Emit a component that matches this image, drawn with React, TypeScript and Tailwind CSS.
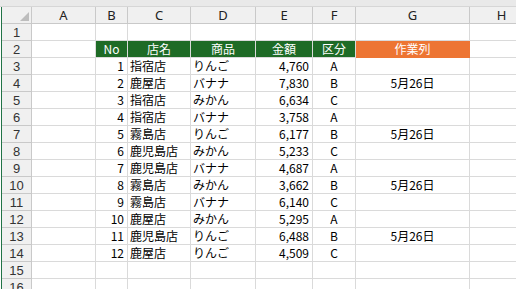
// Excel風シート: 作業列つきの売上表

type Row = { no: number; shop: string; item: string; amount: string; kind: string; work?: string };

const rows: Row[] = [
  { no: 1, shop: '指宿店', item: 'りんご', amount: '4,760', kind: 'A' },
  { no: 2, shop: '鹿屋店', item: 'バナナ', amount: '7,830', kind: 'B', work: '5月26日' },
  { no: 3, shop: '指宿店', item: 'みかん', amount: '6,634', kind: 'C' },
  { no: 4, shop: '指宿店', item: 'バナナ', amount: '3,758', kind: 'A' },
  { no: 5, shop: '霧島店', item: 'りんご', amount: '6,177', kind: 'B', work: '5月26日' },
  { no: 6, shop: '鹿児島店', item: 'みかん', amount: '5,233', kind: 'C' },
  { no: 7, shop: '鹿児島店', item: 'バナナ', amount: '4,687', kind: 'A' },
  { no: 8, shop: '霧島店', item: 'みかん', amount: '3,662', kind: 'B', work: '5月26日' },
  { no: 9, shop: '霧島店', item: 'バナナ', amount: '6,140', kind: 'C' },
  { no: 10, shop: '鹿屋店', item: 'みかん', amount: '5,295', kind: 'A' },
  { no: 11, shop: '鹿児島店', item: 'りんご', amount: '6,488', kind: 'B', work: '5月26日' },
  { no: 12, shop: '鹿屋店', item: 'りんご', amount: '4,509', kind: 'C' },
];

const cols = 'grid grid-cols-[30px_64px_32px_63px_65px_57px_43px_114px_64px]';
const cell = 'h-[17px] border-r border-b border-[#dadada] flex items-center leading-none whitespace-nowrap overflow-hidden';
const rowHead =
  "h-[17px] border-r border-b border-[#c9c9c9] bg-[#f0f0f0] flex items-center justify-center text-[13px] text-[#333] leading-none overflow-hidden [font-family:'Liberation_Sans',sans-serif]";

function Empty() {
  return <div className={cell} />;
}

export default function App() {
  return (
    <div className="w-[516px] h-[289px] overflow-hidden bg-white text-[12px] text-black [font-family:'Noto_Sans_CJK_JP',sans-serif]">
      <div className="h-[7px] bg-[#e9e9e9] border-b border-[#d6d6d6]" />
      <div className="ml-px border-l border-[#217346]">
        {/* 列見出し */}
        <div className={cols}>
          <div className="h-[17px] border-r border-b border-[#c9c9c9] bg-[#f0f0f0] flex items-end justify-end pr-[2px] pb-[2px]">
            <svg width="9" height="9" viewBox="0 0 9 9">
              <polygon points="9,0 9,9 0,9" fill="#bdbdbd" />
            </svg>
          </div>
          {['A', 'B', 'C', 'D', 'E', 'F', 'G', 'H'].map((c) => (
            <div key={c} className="h-[17px] border-r border-b border-[#c9c9c9] bg-[#f0f0f0] flex items-center justify-center text-[13px] text-[#222] leading-none [font-family:'Noto_Sans',sans-serif]">
              {c}
            </div>
          ))}
        </div>

        {/* 1行目 */}
        <div className={cols}>
          <div className={rowHead}>1</div>
          {Array.from({ length: 8 }).map((_, i) => (
            <Empty key={i} />
          ))}
        </div>

        {/* 見出し行 */}
        <div className={cols}>
          <div className={rowHead}>2</div>
          <Empty />
          {['No', '店名', '商品', '金額', '区分'].map((h) => (
            <div key={h} className={`${cell} justify-center bg-[#1e6b26] border-[#1e6b26] text-white`}>
              {h}
            </div>
          ))}
          <div className={`${cell} justify-center bg-[#ed7533] border-[#ed7533] text-white`}>作業列</div>
          <Empty />
        </div>

        {rows.map((r, i) => (
          <div key={r.no} className={cols}>
            <div className={rowHead}>{i + 3}</div>
            <Empty />
            <div className={`${cell} justify-end pr-[3px]`}>{r.no}</div>
            <div className={`${cell} pl-[2px]`}>{r.shop}</div>
            <div className={`${cell} pl-[2px]`}>{r.item}</div>
            <div className={`${cell} justify-end pr-[3px]`}>{r.amount}</div>
            <div className={`${cell} justify-center`}>{r.kind}</div>
            <div className={`${cell} justify-center`}>{r.work}</div>
            <Empty />
          </div>
        ))}

        {[15, 16].map((n) => (
          <div key={n} className={cols}>
            <div className={rowHead}>{n}</div>
            {Array.from({ length: 8 }).map((_, i) => (
              <Empty key={i} />
            ))}
          </div>
        ))}
      </div>
    </div>
  );
}
